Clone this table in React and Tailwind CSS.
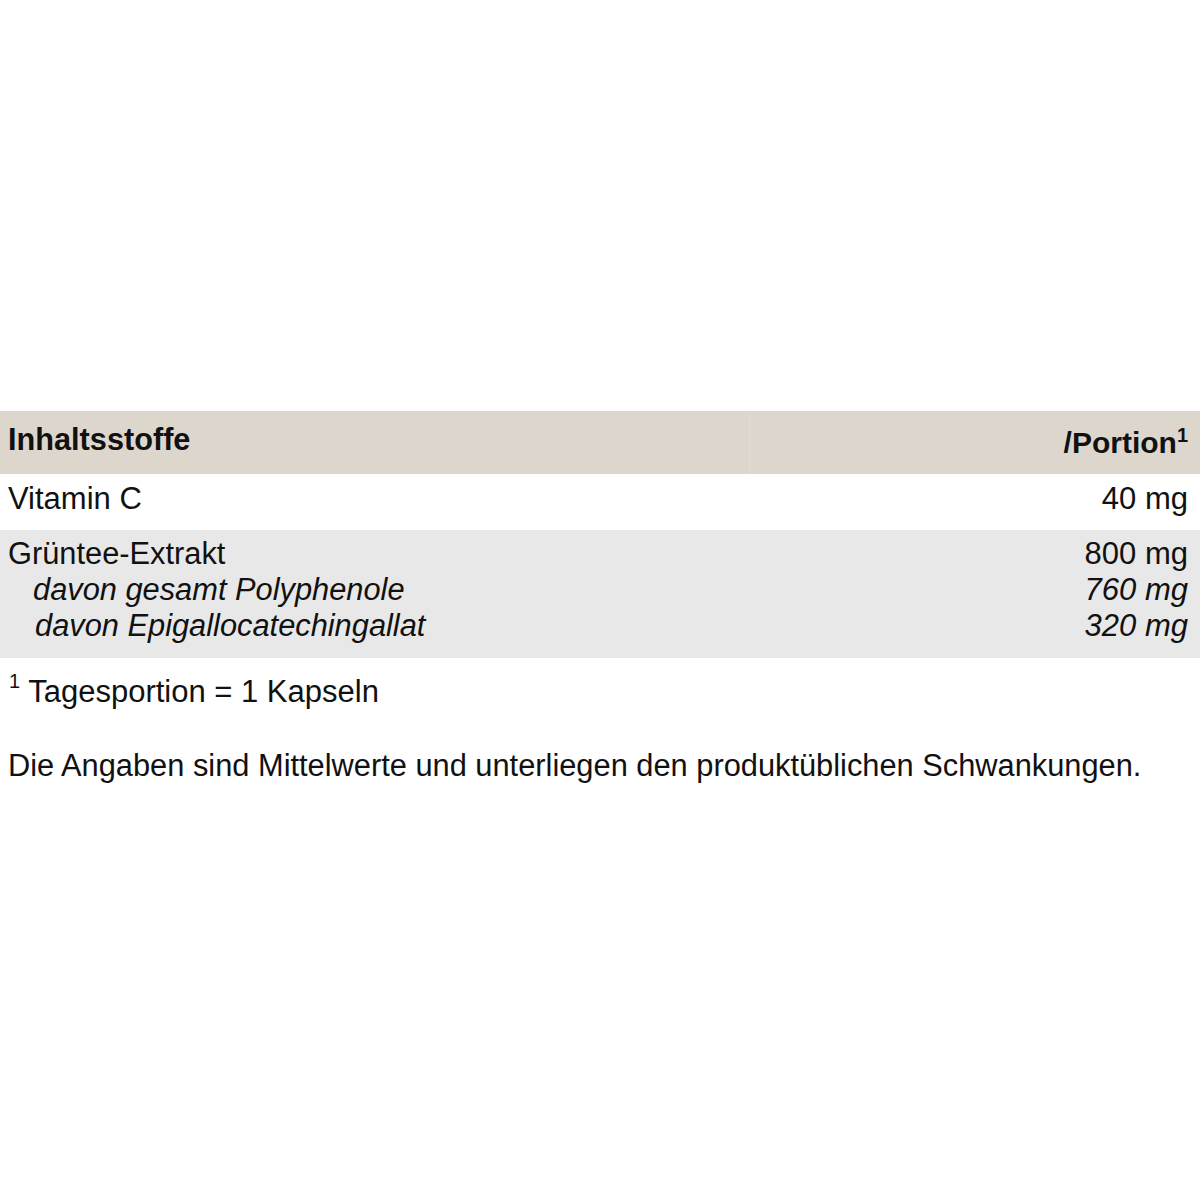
const rows = [
  { name: "Vitamin C", amount: "40 mg" },
];

export default function App() {
  return (
    <div className="w-[1200px] h-[1200px] bg-white text-[#111] font-['Liberation_Sans',Arial,sans-serif]">
      <div className="h-[411px]" />
      <table className="w-full border-collapse text-[31px] leading-[36px]">
        <thead>
          <tr className="bg-[#ddd6cc] h-[63px]">
            <th className="w-[749px] border-r border-[#e2dcd3] pl-[8px] text-left align-top pt-[11px] font-bold text-[30.7px]">
              Inhaltsstoffe
            </th>
            <th className="pr-[12px] text-right align-top pt-[14px] font-bold text-[30px]">
              /Portion<sup className="text-[20px] relative top-[-11px] align-baseline">1</sup>
            </th>
          </tr>
        </thead>
        <tbody>
          {rows.map((r) => (
            <tr key={r.name} className="bg-white h-[56px]">
              <td className="pl-[8px] align-top pt-[7px]">{r.name}</td>
              <td className="pr-[12px] text-right align-top pt-[7px]">{r.amount}</td>
            </tr>
          ))}
          <tr className="bg-[#e8e8e8] h-[128px]">
            <td className="border-r border-[#ebebeb] pl-[8px] align-top pt-[6px] text-[30.8px]">
              <div>Grüntee-Extrakt</div>
              <div className="italic pl-[25px]">davon gesamt Polyphenole</div>
              <div className="italic pl-[27px]">davon Epigallocatechingallat</div>
            </td>
            <td className="pr-[12px] text-right align-top pt-[6px]">
              <div>800 mg</div>
              <div className="italic">760 mg</div>
              <div className="italic">320 mg</div>
            </td>
          </tr>
        </tbody>
      </table>
      <div className="pl-[9px] pt-[16px] text-[31px] leading-[36px]">
        <sup className="text-[20px] relative top-[-14px] align-baseline">1</sup> Tagesportion = 1 Kapseln
      </div>
      <div className="pl-[8px] pt-[38px] text-[30.8px] leading-[36px]">
        Die Angaben sind Mittelwerte und unterliegen den produktüblichen Schwankungen.
      </div>
    </div>
  );
}
